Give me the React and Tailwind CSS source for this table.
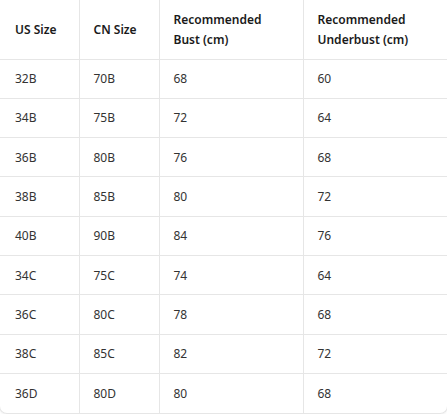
import React from "react";

const rows = [
  ["32B", "70B", "68", "60"],
  ["34B", "75B", "72", "64"],
  ["36B", "80B", "76", "68"],
  ["38B", "85B", "80", "72"],
  ["40B", "90B", "84", "76"],
  ["34C", "75C", "74", "64"],
  ["36C", "80C", "78", "68"],
  ["38C", "85C", "82", "72"],
  ["36D", "80D", "80", "68"],
];

export default function App() {
  return (
    <div className="w-[447px] h-[414px] bg-white overflow-hidden" style={{ fontFamily: "'Noto Sans', 'Open Sans', sans-serif" }}>
      <div className="ml-[-1px] w-[449px] rounded-b-lg border border-t-0 border-[#e6e6e6] shadow-[0_1px_2px_rgba(0,0,0,0.06)] overflow-hidden">
        <table className="w-full table-fixed border-collapse text-[12px] text-[#333]">
          <colgroup>
            <col className="w-[79px]" />
            <col className="w-[80px]" />
            <col className="w-[144px]" />
            <col />
          </colgroup>
          <thead>
            <tr className="h-[59px]">
              <th className="pl-[15px] pr-2 pt-[2px] text-left align-middle font-semibold text-[#1a1a1a] leading-[20px] border-r border-b border-[#e6e6e6]">US Size</th>
              <th className="pl-[14px] pr-2 pt-[2px] text-left align-middle font-semibold text-[#1a1a1a] leading-[20px] border-r border-b border-[#e6e6e6]">CN Size</th>
              <th className="pl-[14px] pr-2 pt-[2px] text-left align-middle font-semibold text-[#1a1a1a] leading-[20px] border-r border-b border-[#e6e6e6]">Recommended<br />Bust (cm)</th>
              <th className="pl-[14px] pr-2 pt-[2px] text-left align-middle font-semibold text-[#1a1a1a] leading-[20px] border-b border-[#e6e6e6]">Recommended<br />Underbust (cm)</th>
            </tr>
          </thead>
          <tbody>
            {rows.map((r, i) => (
              <tr key={i} className="h-[39.3px]">
                {r.map((c, j) => (
                  <td
                    key={j}
                    className={`pr-2 pt-[1px] align-middle border-[#e6e6e6] ${j === 0 ? "pl-[15px]" : "pl-[14px]"} ${j < 3 ? "border-r" : ""} ${i < rows.length - 1 ? "border-b" : ""}`}
                  >
                    {c}
                  </td>
                ))}
              </tr>
            ))}
          </tbody>
        </table>
      </div>
    </div>
  );
}
